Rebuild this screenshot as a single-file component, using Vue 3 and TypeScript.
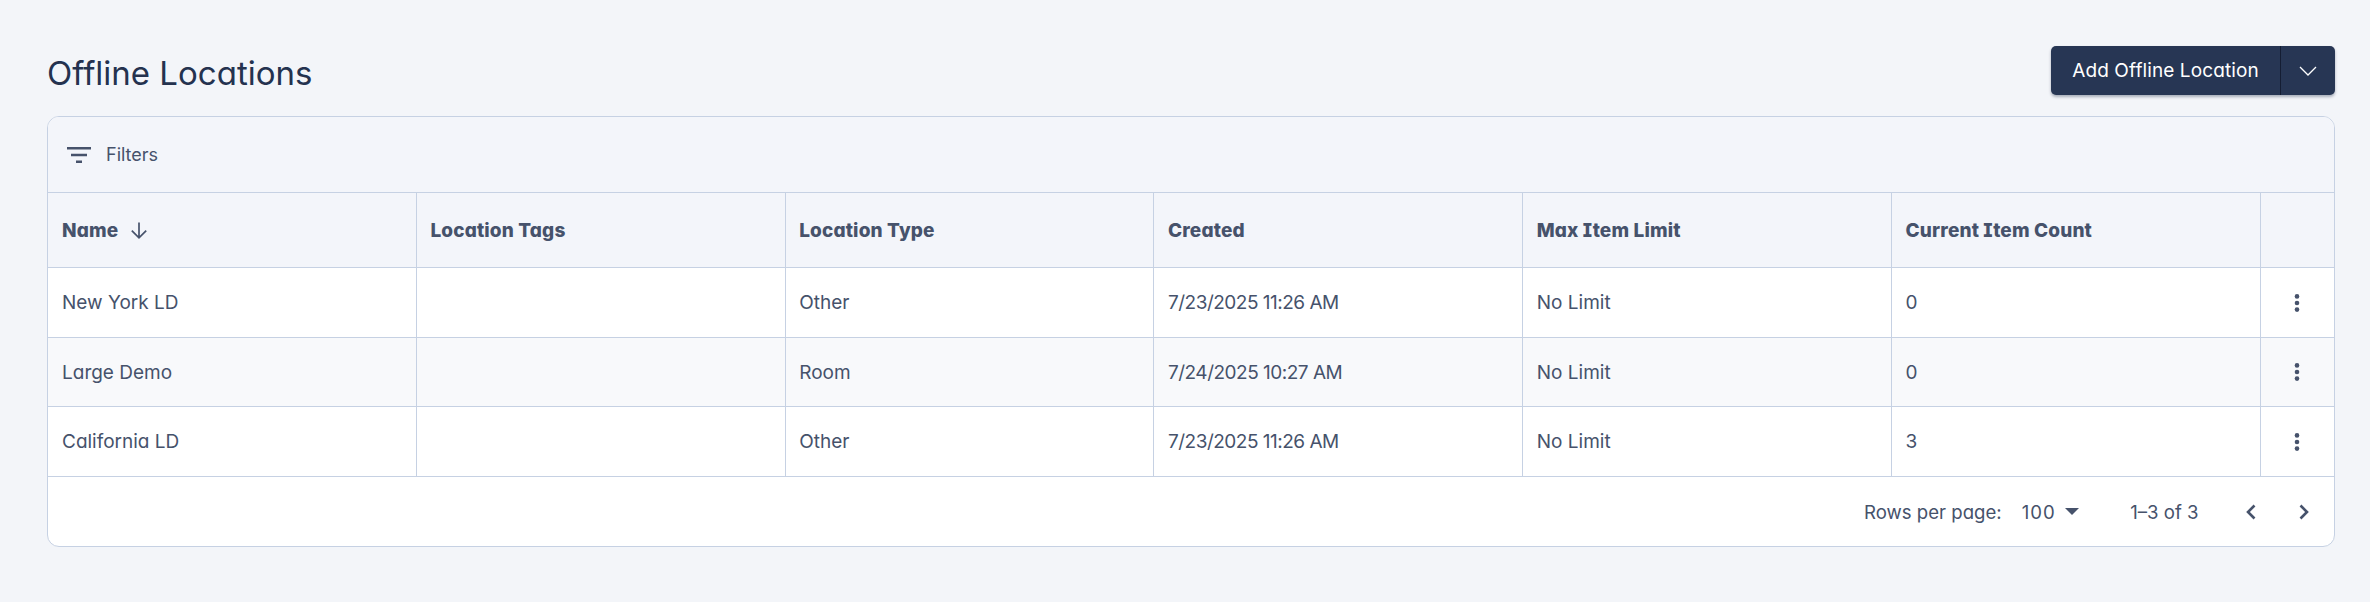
<script setup lang="ts">
interface Row { name: string; tags: string; type: string; created: string; limit: string; count: string }
const columns: string[] = ['Location Tags', 'Location Type', 'Created', 'Max Item Limit', 'Current Item Count']
const rows: Row[] = [
  { name: 'New York LD', tags: '', type: 'Other', created: '7/23/2025 11:26 AM', limit: 'No Limit', count: '0' },
  { name: 'Large Demo', tags: '', type: 'Room', created: '7/24/2025 10:27 AM', limit: 'No Limit', count: '0' },
  { name: 'California LD', tags: '', type: 'Other', created: '7/23/2025 11:26 AM', limit: 'No Limit', count: '3' },
]
</script>

<template>
  <main class="page">
    <header class="top">
      <h1 class="title">Offline Locations</h1>
      <div class="split">
        <button class="split-main">Add Offline Location</button>
        <button class="split-arrow" aria-label="More">
          <svg width="18" height="10" viewBox="0 0 18 10"><path d="M1 1l8 8 8-8" fill="none" stroke="#fff" stroke-width="1.3" /></svg>
        </button>
      </div>
    </header>

    <section class="card">
      <div class="filters">
        <svg width="24" height="16" viewBox="0 0 24 16"><path d="M0 0h24v2.6H0zM4 6.7h16v2.6H4zM9 13.4h6V16H9z" fill="#46526b" /></svg>
        <span>Filters</span>
      </div>
      <div class="grid head">
        <div class="cell">Name
          <svg class="sort" width="16" height="17" viewBox="0 0 16 17"><path d="M8 0.5v15M0.8 8.6L8 15.8 15.2 8.6" fill="none" stroke="#46526b" stroke-width="1.7" /></svg>
        </div>
        <div v-for="c in columns" :key="c" class="cell">{{ c }}</div>
        <div class="cell"></div>
      </div>
      <div v-for="(r, i) in rows" :key="r.name" class="grid row" :class="{ alt: i === 1, mid: i === 1 }">
        <div class="cell">{{ r.name }}</div>
        <div class="cell">{{ r.tags }}</div>
        <div class="cell">{{ r.type }}</div>
        <div class="cell date">{{ r.created }}</div>
        <div class="cell">{{ r.limit }}</div>
        <div class="cell">{{ r.count }}</div>
        <div class="cell menu">
          <svg width="6" height="18" viewBox="0 0 6 18"><circle cx="3" cy="2.4" r="2.3" /><circle cx="3" cy="9" r="2.3" /><circle cx="3" cy="15.6" r="2.3" /></svg>
        </div>
      </div>
      <footer class="pager">
        <span>Rows per page:</span>
        <span class="size">100</span>
        <svg class="caret" width="14" height="7" viewBox="0 0 14 7"><path d="M0 0h14L7 7z" fill="#46526b" /></svg>
        <span class="range">1–3 of 3</span>
        <svg class="prev" width="10" height="16" viewBox="0 0 10 16"><path d="M8.5 1.5L2 8l6.5 6.5" fill="none" stroke="#46526b" stroke-width="2.6" /></svg>
        <svg class="next" width="10" height="16" viewBox="0 0 10 16"><path d="M1.5 1.5L8 8l-6.5 6.5" fill="none" stroke="#46526b" stroke-width="2.6" /></svg>
      </footer>
    </section>
  </main>
</template>

<style>
html, body { background: #f3f5f9; }
</style>

<style scoped>
.page {
  box-sizing: border-box;
  width: 2370px;
  height: 602px;
  padding: 46px 35px 0 47px;
  font-family: Inter, "Noto Sans", sans-serif;
  font-feature-settings: "cv11" 1, "cv08" 1;
  color: #46526b;
  font-size: 19px;
}
.top {
  display: flex;
  justify-content: space-between;
  align-items: flex-start;
  height: 70px;
}
.title {
  margin: 0;
  font-size: 33px;
  line-height: 55px;
  font-weight: 400;
  color: #24324f;
}
.split {
  display: flex;
  height: 49px;
  border-radius: 5px;
  background: #273654;
  box-shadow: 0 2px 3px rgba(30, 40, 70, .35);
  overflow: hidden;
}
.split button {
  border: 0;
  background: none;
  color: #fff;
  font: inherit;
  font-feature-settings: inherit;
  padding: 0;
}
.split-main {
  width: 230px;
  border-right: 1px solid #141d33 !important;
  letter-spacing: .1px;
}
.split-arrow {
  width: 54px;
  display: flex;
  align-items: center;
  justify-content: center;
}
.card {
  box-sizing: border-box;
  height: 431px;
  border: 1px solid #c6d1e3;
  border-radius: 12px;
  overflow: hidden;
  background: #fff;
}
.filters {
  height: 76px;
  box-sizing: border-box;
  display: flex;
  align-items: center;
  gap: 15px;
  padding-left: 19px;
  background: #f3f5fa;
  border-bottom: 1px solid #c6d1e3;
  font-size: 18px;
}
.grid {
  display: grid;
  grid-template-columns: repeat(6, 368.8px) 1fr;
  box-sizing: border-box;
  border-bottom: 1px solid #c6d1e3;
}
.head {
  height: 75px;
  background: #f3f5fa;
  font-weight: 800;
  letter-spacing: .15px;
}
.row { height: 70px; }
.mid { height: 69px; }
.alt { background: #f8f9fb; }
.cell {
  display: flex;
  align-items: center;
  gap: 13px;
  padding-left: 13.6px;
  border-right: 1px solid #c6d1e3;
}
.cell:first-child { padding-left: 14px; }
.cell:last-child { border-right: 0; }
.date { letter-spacing: -0.5px; }
.menu {
  padding: 0;
  justify-content: center;
  fill: #46526b;
}
.pager {
  height: 69px;
  display: flex;
  align-items: center;
  justify-content: flex-end;
  padding-right: 25px;
  font-size: 18.6px;
}
.size { margin-left: 20px; letter-spacing: 1px; }
.caret { margin-left: 9px; }
.range { margin-left: 51.5px; }
.prev { margin-left: 47.5px; }
.next { margin-left: 43px; }
</style>
